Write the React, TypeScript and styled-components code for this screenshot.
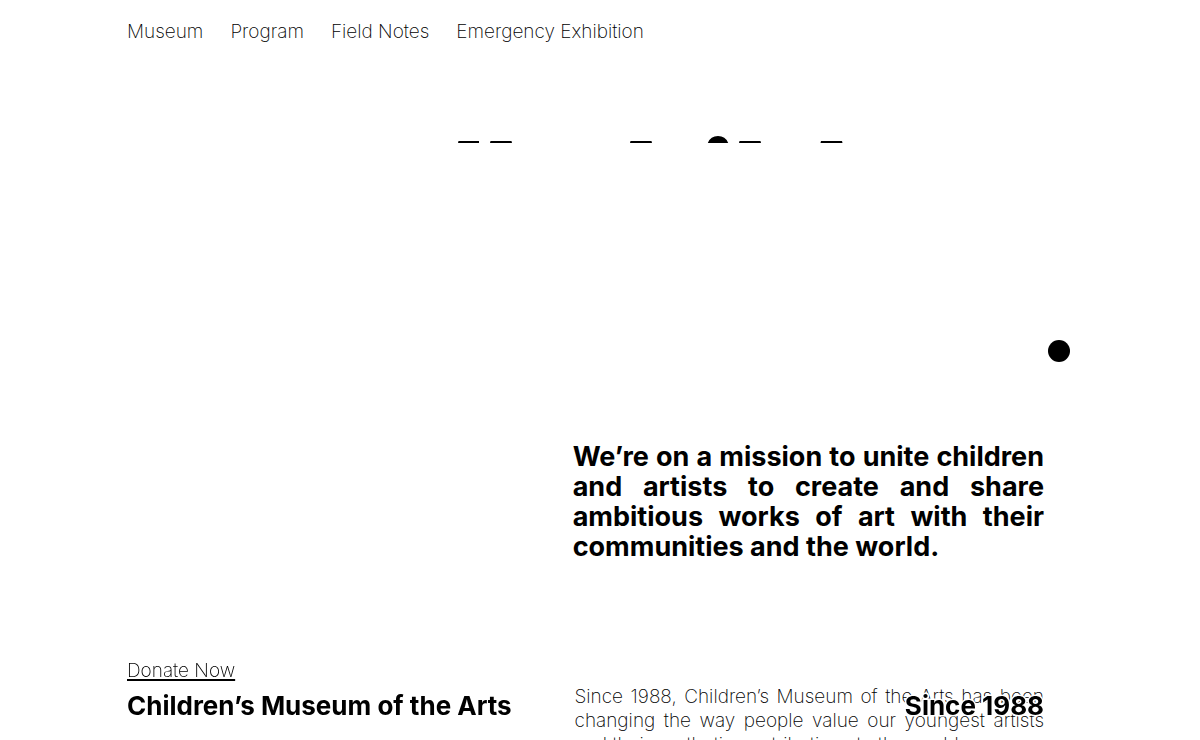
import React from "react";
import styled, { createGlobalStyle } from "styled-components";

const GlobalStyle = createGlobalStyle`
  *, *::before, *::after { box-sizing: border-box; }
  body {
    margin: 0;
    background: #fff;
    color: #000;
    font-family: Inter, "Liberation Sans", sans-serif;
    overflow: hidden;
  }
`;

const Page = styled.div`
  height: 100vh;
  overflow: hidden;
  padding: 0 13% 0 127px;
`;

const Nav = styled.nav`
  display: flex;
  gap: 27px;
  padding-top: 20px;
`;

const NavLink = styled.a`
  color: #000;
  font-size: 19px;
  font-weight: 200;
  line-height: 24px;
  text-decoration: none;
  white-space: nowrap;
`;

const Banner = styled.header`
  display: flex;
  justify-content: center;
  padding-top: 90px;
`;

const Wordmark = styled.svg`
  display: block;
  width: 386px;
  height: 10px;
  margin-left: 129px;
`;

const Mission = styled.h1`
  margin: 298px 0 0 48.6%;
  font-size: 27px;
  font-weight: 700;
  line-height: 30px;
  text-align: justify;
`;

const About = styled.p`
  margin: 123px 0 0 48.8%;
  font-size: 19px;
  font-weight: 200;
  line-height: 24px;
  text-align: justify;
`;

const Footer = styled.footer`
  position: fixed;
  left: 127px;
  right: 13%;
  bottom: 16px;
`;

const FooterRow = styled.div`
  display: flex;
  justify-content: space-between;
  padding-top: 5px;
  font-size: 26px;
  font-weight: 700;
  line-height: 36px;
`;

const Since = styled.span`
  -webkit-text-stroke: 3px #fff;
  paint-order: stroke fill;
`;

const Donate = styled.a`
  display: block;
  width: fit-content;
  color: #000;
  font-size: 19px;
  font-weight: 200;
  line-height: 24px;
  text-decoration-thickness: 2px;
  text-underline-offset: 2px;
`;

const Dot = styled.div`
  position: fixed;
  top: 340px;
  right: 130px;
  width: 22px;
  height: 22px;
  border-radius: 50%;
  background: #000;
`;

const links = ["Museum", "Program", "Field Notes", "Emergency Exhibition"];

export default function App() {
  return (
    <Page>
      <GlobalStyle />
      <Nav>
        {links.map((label) => (
          <NavLink key={label} href="#">{label}</NavLink>
        ))}
      </Nav>
      <Banner>
        <Wordmark viewBox="0 0 386 10" aria-hidden="true">
          <path d="M1.5 7h20.5v2H1zM33.5 7h21l.5 2H33zM173.5 7h21l.5 2h-22zM282.5 7h21l.5 2h-22zM364 7h21l.5 2h-22z" />
          <path d="M250.8 9a11 11 0 0 1 20.4 0z" />
        </Wordmark>
      </Banner>
      <Mission>
        We’re on a mission to unite children and artists to create and share
        ambitious works of art with their communities and the world.
      </Mission>
      <About>
        Since 1988, Children’s Museum of the Arts has been changing the way
        people value our youngest artists and their aesthetic contributions to
        the world.
      </About>
      <Footer>
        <Donate href="#">Donate Now</Donate>
        <FooterRow>
          <span>Children’s Museum of the Arts</span>
          <Since>Since 1988</Since>
        </FooterRow>
      </Footer>
      <Dot />
    </Page>
  );
}
